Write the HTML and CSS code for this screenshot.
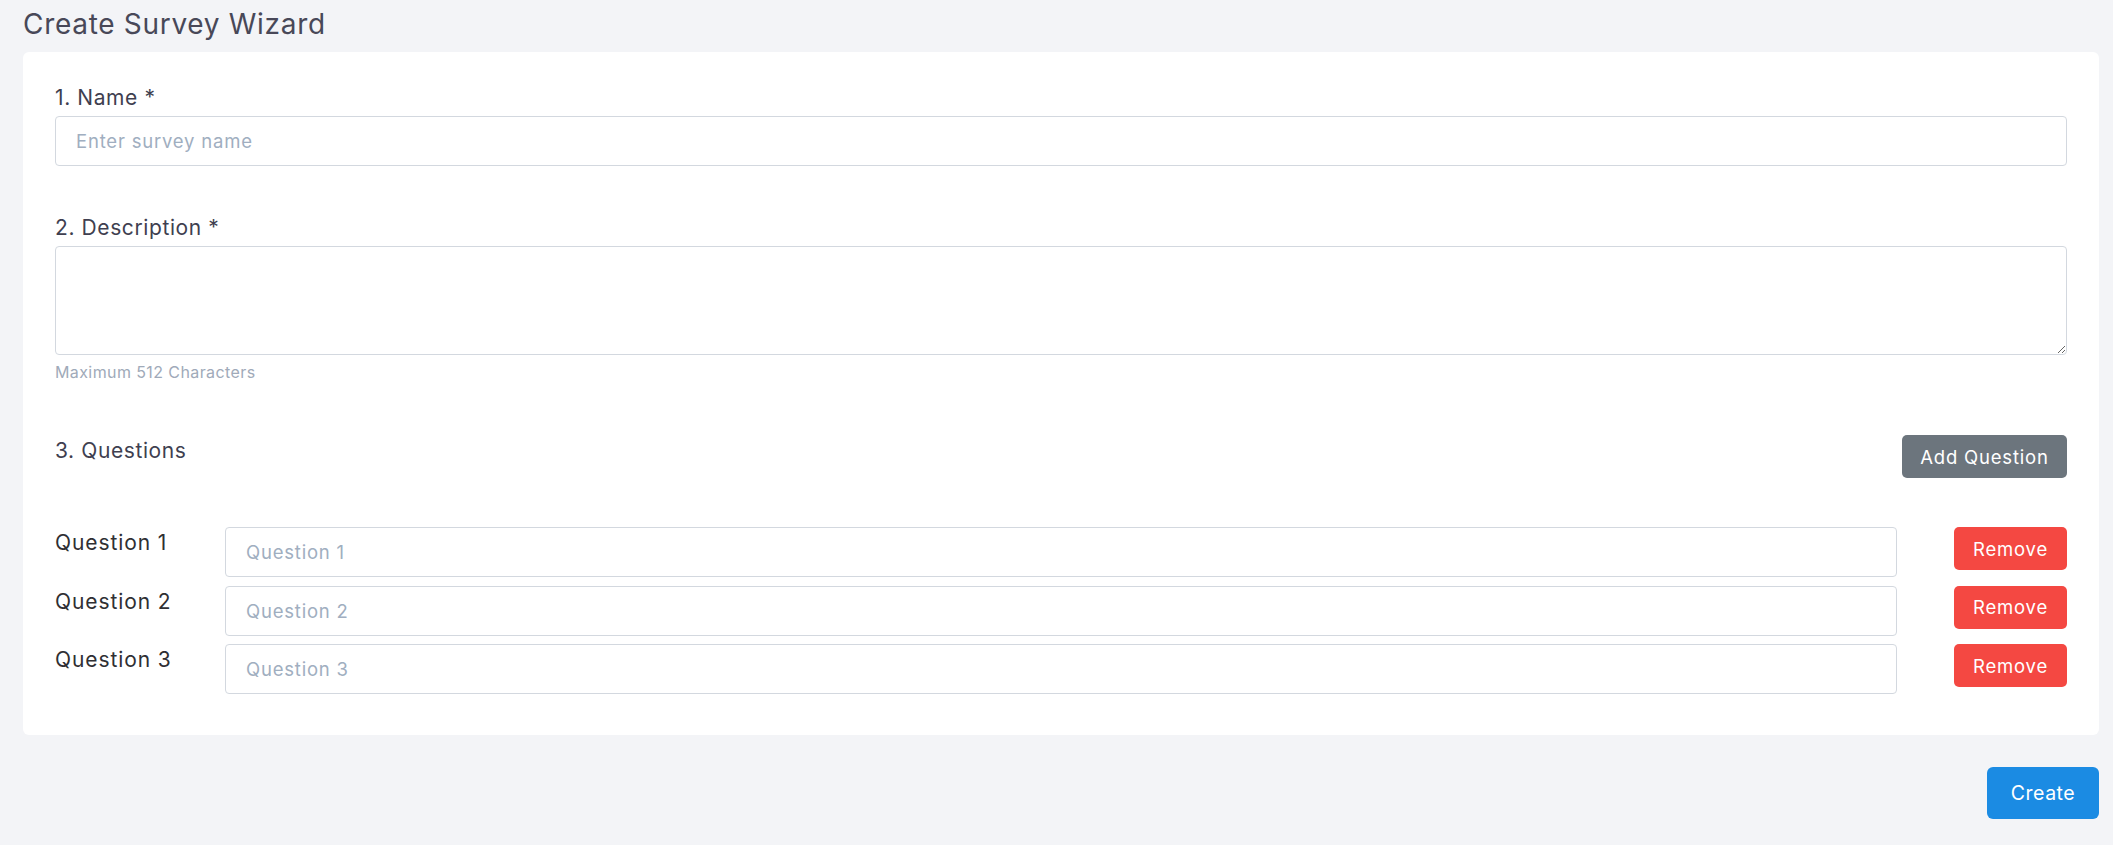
FILE: index.html
```html
<!DOCTYPE html>
<html lang="en">
<head>
<meta charset="utf-8">
<title>Create Survey Wizard</title>
<link rel="stylesheet" href="styles.css">
</head>
<body>
<div class="page">
  <h1 class="title">Create Survey Wizard</h1>
  <div class="card">
    <div class="field field-name">
      <label class="field-label" for="name">1. Name *</label>
      <input class="text-input" id="name" type="text" placeholder="Enter survey name">
    </div>
    <div class="field field-desc">
      <label class="field-label" for="desc">2. Description *</label>
      <textarea class="text-area" id="desc"></textarea>
      <div class="help">Maximum 512 Characters</div>
    </div>
    <div class="questions-head">
      <div class="field-label">3. Questions</div>
      <button class="btn btn-gray btn-add" type="button">Add Question</button>
    </div>
    <div class="questions">
      <div class="q-row">
        <label class="q-label" for="q1">Question 1</label>
        <input class="text-input" id="q1" type="text" placeholder="Question 1">
        <div class="q-action"><button class="btn btn-red btn-remove" type="button">Remove</button></div>
      </div>
      <div class="q-row">
        <label class="q-label" for="q2">Question 2</label>
        <input class="text-input" id="q2" type="text" placeholder="Question 2">
        <div class="q-action"><button class="btn btn-red btn-remove" type="button">Remove</button></div>
      </div>
      <div class="q-row">
        <label class="q-label" for="q3">Question 3</label>
        <input class="text-input" id="q3" type="text" placeholder="Question 3">
        <div class="q-action"><button class="btn btn-red btn-remove" type="button">Remove</button></div>
      </div>
    </div>
  </div>
  <div class="footer">
    <button class="btn btn-blue btn-create" type="button">Create</button>
  </div>
</div>
</body>
</html>
```

FILE: styles.css
```css
* { box-sizing: border-box; }

html, body {
  margin: 0;
  padding: 0;
  background: #f3f4f7;
  font-family: "Inter", "Noto Sans", "Liberation Sans", sans-serif;
}

.page {
  padding: 4px 14px 20px 23px;
}

.title {
  margin: 0 0 8px 0;
  font-size: 28px;
  line-height: 40px;
  font-weight: 400;
  color: #484858;
  letter-spacing: 0.7px;
}

.card {
  background: #ffffff;
  border-radius: 6px;
  padding: 30px 32px 41px 32px;
}

.field-label {
  display: block;
  font-size: 21px;
  line-height: 32px;
  color: #3f3f50;
  margin-bottom: 2px;
  letter-spacing: 0.6px;
}

.field-name { margin-bottom: 46px; }

.text-input {
  display: block;
  width: 100%;
  height: 50px;
  border: 1px solid #d3d8df;
  border-radius: 4px;
  padding: 0 20px;
  font-family: inherit;
  font-size: 18.5px;
  color: #333;
  background: #fff;
  outline: none;
}

.text-input::placeholder { color: #a0aec0; letter-spacing: 0.8px; }

.text-area {
  display: block;
  width: 100%;
  height: 109px;
  border: 1px solid #d3d8df;
  border-radius: 4px;
  padding: 12px 20px;
  font-family: inherit;
  font-size: 18.5px;
  background: #fff;
  outline: none;
  resize: vertical;
}

.help {
  margin-top: 5px;
  font-size: 16px;
  line-height: 24px;
  color: #a0aab9;
  letter-spacing: 0.4px;
}

.questions-head {
  margin-top: 51px;
  display: flex;
  justify-content: space-between;
  align-items: flex-start;
}

.questions-head .field-label { margin: 0; }

.questions {
  margin-top: 49px;
  display: flex;
  flex-direction: column;
  gap: 8.5px;
}

.q-row {
  display: grid;
  grid-template-columns: 170px 1fr 170px;
  align-items: start;
}

.q-label {
  font-size: 21px;
  line-height: 32px;
  color: #2f2f33;
  letter-spacing: 0.9px;
}

.q-action {
  display: flex;
  justify-content: flex-end;
}

.btn {
  border: none;
  color: #ffffff;
  font-family: inherit;
  font-size: 18.5px;
  border-radius: 5px;
  padding: 0;
  cursor: pointer;
  letter-spacing: 0.8px;
}

.btn-gray { background: #6c757d; }
.btn-red { background: #f44842; }
.btn-blue { background: #1b8be3; }

.btn-add { width: 165px; height: 43px; }
.btn-remove { width: 113px; height: 43px; }

.footer {
  margin-top: 32px;
  display: flex;
  justify-content: flex-end;
}

.btn-create {
  width: 112px;
  height: 52px;
  font-size: 19.5px;
  border-radius: 6px;
  letter-spacing: 0.5px;
}
```
